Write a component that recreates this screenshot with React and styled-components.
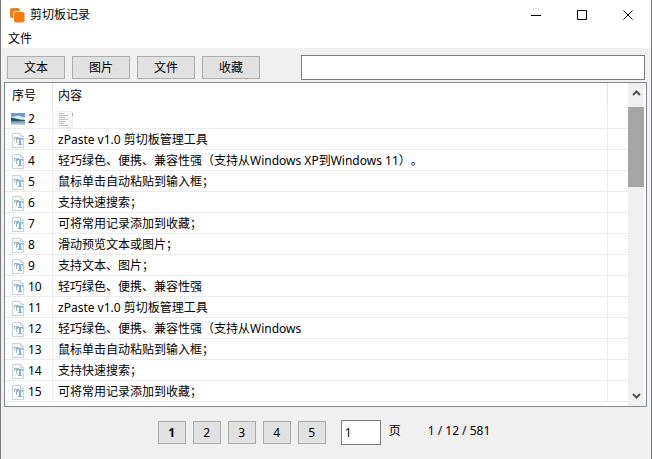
import React, { useState } from 'react';
import styled, { createGlobalStyle } from 'styled-components';

const GlobalStyle = createGlobalStyle`
  *, *::before, *::after { box-sizing: border-box; }
  body {
    margin: 0;
    background: #f0f0f0;
    color: #000;
    text-spacing-trim: space-all;
  }
  body, button, input {
    font-family: "Noto Sans", "Noto Sans CJK SC", sans-serif;
    font-size: 12px;
    line-height: 16px;
  }
`;

const Window = styled.div`
  display: flex;
  flex-direction: column;
  min-height: 100vh;
  border: solid #7a7a7a;
  border-width: 0 1px;
  background: #f0f0f0;
`;

const TitleBar = styled.header`
  display: flex;
  align-items: center;
  height: 29px;
  padding-left: 8px;
  background: #fff;
`;

const Title = styled.h1`
  flex: 1;
  margin: 0 0 0 5px;
  font-size: 12px;
  font-weight: 400;
`;

const CaptionButton = styled.button`
  display: flex;
  align-items: center;
  justify-content: center;
  width: 46px;
  height: 28px;
  padding: 0;
  border: 0;
  background: transparent;
  &:hover { background: #e5e5e5; }
`;

const MenuBar = styled.nav`
  display: flex;
  height: 19px;
  padding-left: 7px;
  background: #fff;
`;

const MenuItem = styled.button`
  height: 19px;
  padding: 2px 0 1px;
  border: 0;
  background: transparent;
`;

const Toolbar = styled.div`
  display: flex;
  align-items: center;
  gap: 7px;
  padding: 7px 6px 2px;
`;

const PushButton = styled.button`
  width: ${(p) => (p.$small ? 28 : 58)}px;
  height: 23px;
  padding: 1px 0 0;
  border: 1px solid #adadad;
  background: #e1e1e1;
  font-weight: ${(p) => (p.$active ? 700 : 400)};
  &:hover { border-color: #0078d7; background: #e5f1fb; }
`;

const TextField = styled.input`
  height: 25px;
  padding: 1px 3px;
  border: 1px solid #7a7a7a;
  border-radius: 0;
  background: #fff;
  outline: 0;
`;

const SearchField = styled(TextField)`
  flex: 1;
  min-width: 0;
  margin-left: 34px;
`;

const ListBox = styled.main`
  display: flex;
  margin: 0 4px 0 3px;
  padding-right: 2px;
  border: 1px solid #828790;
  background: #fff;
`;

const RecordArea = styled.div`
  flex: 1;
  min-width: 0;
  padding: 0 0 4px;
`;

const RecordTable = styled.table`
  width: 100%;
  border-collapse: separate;
  border-spacing: 0;
  table-layout: fixed;
`;

const HeadCell = styled.th`
  width: ${(p) => p.$width || 'auto'};
  height: 25px;
  padding: 0 0 0 ${(p) => (p.$first ? 7 : 5)}px;
  border-right: ${(p) => (p.$last ? 0 : 1)}px solid #e5e5e5;
  font-weight: 400;
  text-align: left;
`;

const Cell = styled.td`
  height: 21px;
  padding: 2px 0 0 5px;
  border: solid #ececec;
  border-width: 0 ${(p) => (p.$last ? 0 : 1)}px 1px 0;
  overflow: hidden;
  white-space: nowrap;
`;

const IndexLabel = styled.span`
  display: flex;
  align-items: center;
  gap: 3px;
  padding-left: 1px;
`;

const Thumbnail = styled.svg`
  display: block;
  margin-left: -1px;
`;

const ScrollBar = styled.div`
  display: flex;
  flex-direction: column;
  width: 16px;
  background: #f0f0f0;
`;

const ScrollButton = styled.button`
  display: flex;
  align-items: center;
  justify-content: center;
  height: 20px;
  padding: 0;
  border: 0;
  background: transparent;
`;

const ScrollTrack = styled.div`
  flex: 1;
  padding-top: 4px;
`;

const ScrollThumb = styled.div`
  height: 80px;
  background: #a6a6a6;
`;

const Pager = styled.footer`
  display: flex;
  align-items: center;
  justify-content: center;
  gap: 7px;
  padding: 13px 4px 13px 0;
`;

const PageField = styled(TextField)`
  width: 40px;
  margin-left: 8px;
`;

const PageLabel = styled.label`
  margin-left: 1px;
  padding-bottom: 4px;
`;

const PageStatus = styled.span`
  margin-left: 20px;
  padding-bottom: 4px;
`;

const AppLogo = () => (
  <svg width="16" height="16" viewBox="0 0 16 16" aria-hidden="true">
    <rect x="1" y="1" width="10" height="10" rx="2" fill="#e8821e" />
    <rect x="4.300" y="4.300" width="12" height="12" rx="2.500" fill="#fff" />
    <rect x="5" y="5" width="10.500" height="10.500" rx="2" fill="#fb7a08" />
  </svg>
);

const captionShapes = {
  最小化: 'M0 5.5h10',
  最大化: 'M.5 .5h9v9h-9z',
  关闭: 'M.5 .5l9 9M9.5 .5l-9 9',
};

const TextIcon = () => (
  <svg width="14" height="15" viewBox="0 0 14 15" aria-hidden="true">
    <path d="M1.500 .5h8l3 3v11h-11z" fill="#fafcfd" stroke="#c9d3da" />
    <path d="M9.500 .5v3h3" fill="none" stroke="#c9d3da" />
    <path d="M3 4h5v1H3zM5 4h1v6H5zM3 4h1v3H3z" fill="#a3b7c6" />
    <path d="M6 5h6v1H6zM8 5h2v7H8zM6 5h1v2H6zM11 5h1v2h-1zM7 11h4v1H7z" fill="#7fb2da" />
  </svg>
);

const ImageIcon = () => (
  <svg width="14" height="12" viewBox="0 0 14 12" aria-hidden="true">
    <rect width="14" height="12" fill="#b9cfe4" />
    <rect width="14" height="4" fill="#6d9bd0" />
    <path d="M3 3.500l4-1 7 2v3H0V4z" fill="#dce8f3" />
    <path d="M0 4.500c4 .3 6 2 14 2.500V9H0z" fill="#2c5561" />
    <path d="M0 8c4 .8 9-.5 14 0v3H0z" fill="#7ba9c2" />
    <path d="M0 10.500h14V12H0z" fill="#bcd5e5" />
  </svg>
);

const DocumentThumb = () => (
  <Thumbnail width="16" height="17" viewBox="0 0 16 17" aria-label="图片预览">
    <path d="M.5 .5h15v16H.5z" fill="#f8f8f8" stroke="#efefef" />
    <path
      d="M3 2.500h4M3 4.500h8M3 6.500h5M3 8.500h8M3 10.500h6M3 12.500h4M3 14.500h8"
      stroke="#bdbdbd"
    />
    <path d="M2.500 2v13" stroke="#dedede" />
    <path d="M15.500 2v3" stroke="#a8a8a8" />
  </Thumbnail>
);

const Chevron = ({ down }) => (
  <svg width="9" height="6" viewBox="0 0 9 6" aria-hidden="true">
    <path d={down ? 'M1 1l3.500 3.500L8 1' : 'M1 5l3.500-3.500L8 5'} fill="none" stroke="#505050" strokeWidth="2" />
  </svg>
);

const records = [
  [2, null],
  [3, 'zPaste v1.0 剪切板管理工具'],
  [4, '轻巧绿色、便携、兼容性强（支持从Windows XP到Windows 11）。'],
  [5, '鼠标单击自动粘贴到输入框；'],
  [6, '支持快速搜索；'],
  [7, '可将常用记录添加到收藏；'],
  [8, '滑动预览文本或图片；'],
  [9, '支持文本、图片；'],
  [10, '轻巧绿色、便携、兼容性强'],
  [11, 'zPaste v1.0 剪切板管理工具'],
  [12, '轻巧绿色、便携、兼容性强（支持从Windows'],
  [13, '鼠标单击自动粘贴到输入框；'],
  [14, '支持快速搜索；'],
  [15, '可将常用记录添加到收藏；'],
];

export default function App() {
  const [page, setPage] = useState('1');
  const [query, setQuery] = useState('');

  return (
    <Window>
      <GlobalStyle />
      <TitleBar>
        <AppLogo />
        <Title>剪切板记录</Title>
        {Object.entries(captionShapes).map(([label, d]) => (
          <CaptionButton key={label} aria-label={label}>
            <svg width="10" height="10" viewBox="0 0 10 10">
              <path d={d} fill="none" stroke="#000" />
            </svg>
          </CaptionButton>
        ))}
      </TitleBar>
      <MenuBar>
        <MenuItem>文件</MenuItem>
      </MenuBar>
      <Toolbar>
        {['文本', '图片', '文件', '收藏'].map((name) => (
          <PushButton key={name}>{name}</PushButton>
        ))}
        <SearchField aria-label="搜索" value={query} onChange={(e) => setQuery(e.target.value)} />
      </Toolbar>
      <ListBox>
        <RecordArea>
          <RecordTable>
            <thead>
              <tr>
                <HeadCell $width="48px" $first>序号</HeadCell>
                <HeadCell>内容</HeadCell>
                <HeadCell $width="20px" $last />
              </tr>
            </thead>
            <tbody>
              {records.map(([id, text]) => (
                <tr key={id}>
                  <Cell>
                    <IndexLabel>
                      {text ? <TextIcon /> : <ImageIcon />}
                      {id}
                    </IndexLabel>
                  </Cell>
                  <Cell>{text || <DocumentThumb />}</Cell>
                  <Cell $last />
                </tr>
              ))}
            </tbody>
          </RecordTable>
        </RecordArea>
        <ScrollBar>
          <ScrollButton aria-label="向上滚动"><Chevron /></ScrollButton>
          <ScrollTrack>
            <ScrollThumb />
          </ScrollTrack>
          <ScrollButton aria-label="向下滚动"><Chevron down /></ScrollButton>
        </ScrollBar>
      </ListBox>
      <Pager>
        {['1', '2', '3', '4', '5'].map((n) => (
          <PushButton key={n} $small $active={n === page} onClick={() => setPage(n)}>
            {n}
          </PushButton>
        ))}
        <PageField id="page" value={page} onChange={(e) => setPage(e.target.value)} />
        <PageLabel htmlFor="page">页</PageLabel>
        <PageStatus>1 / 12 / 581</PageStatus>
      </Pager>
    </Window>
  );
}
